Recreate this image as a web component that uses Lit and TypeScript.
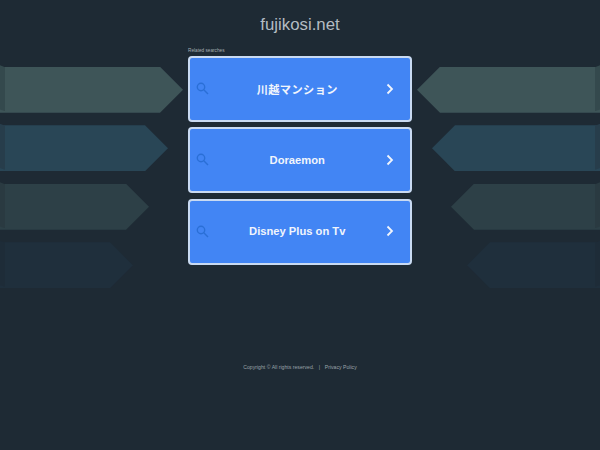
import { LitElement, html, css } from "lit";
import { customElement } from "lit/decorators.js";

const ARROWS = [
  { width: 183, color: "#3e5558", tail: "#34494d" },
  { width: 168, color: "#294656", tail: "#273d4b" },
  { width: 149, color: "#2d4047", tail: "#2a3a41" },
  { width: 133, color: "#1f2f3c", tail: "#1e2c38" },
];
const LINKS = [
  { text: "川越マンション", ja: true },
  { text: "Doraemon", ja: false },
  { text: "Disney Plus on Tv", ja: false },
];

@customElement("app-root")
export class AppRoot extends LitElement {
  static styles = css`
    :host {
      display: block;
      width: 600px;
      height: 450px;
      overflow: hidden;
      background: #1e2a34;
      font-family: "Liberation Sans", "Noto Sans CJK JP", sans-serif;
    }
    .title {
      height: 48px;
      padding-top: 14px;
      box-sizing: border-box;
      text-align: center;
      font-size: 16.8px;
      line-height: 21px;
      color: #b4bcc2;
    }
    .stage {
      display: flex;
      height: 301px;
    }
    .side {
      flex: 1;
      display: flex;
      flex-direction: column;
      gap: 12.5px;
      padding-top: 18.8px;
    }
    .side.right {
      align-items: flex-end;
    }
    .arrow {
      position: relative;
      height: 46px;
      flex: none;
    }
    .right .arrow {
      transform: scaleX(-1);
    }
    .body {
      height: 100%;
      clip-path: polygon(0 0, calc(100% - 23px) 0, 100% 50%, calc(100% - 23px) 100%, 0 100%);
    }
    .tail {
      position: absolute;
      left: 0;
      top: -1.5px;
      height: 46px;
      width: 5px;
      clip-path: polygon(0 0, 100% 4%, 100% 100%, 0 96%);
    }
    .center {
      width: 224px;
      flex: none;
    }
    .label {
      height: 8px;
      font-size: 4.7px;
      line-height: 6px;
      color: #a5adb3;
    }
    .links {
      display: flex;
      flex-direction: column;
      gap: 5.4px;
    }
    .link {
      height: 66px;
      box-sizing: border-box;
      border: 2px solid #c9daf2;
      border-radius: 4px;
      background: #4285f4;
      display: flex;
      align-items: center;
      padding: 0 16px 1px 5.5px;
      color: #f1f5fc;
      font-size: 11.2px;
      font-weight: 700;
    }
    .link span {
      flex: 1;
      text-align: center;
    }
    .link span.ja {
      letter-spacing: 0.4px;
    }
    .link svg {
      flex: none;
      display: block;
    }
    .footer {
      margin-top: 14px;
      display: flex;
      justify-content: center;
      gap: 4.6px;
      font-size: 5.15px;
      line-height: 9px;
      color: #9aa3a9;
    }
  `;

  render() {
    const arrows = ARROWS.map(
      (a) => html`<div class="arrow" style="width:${a.width}px">
        <div class="body" style="background:${a.color}"></div>
        <div class="tail" style="background:${a.tail}"></div>
      </div>`
    );
    return html`
      <div class="title">fujikosi.net</div>
      <div class="stage">
        <div class="side">${arrows}</div>
        <div class="center">
          <div class="label">Related searches</div>
          <div class="links">
            ${LINKS.map(
              (l) => html`<div class="link">
                <svg width="13" height="13" viewBox="0 0 13 13" fill="none" stroke="#2a6fd6" stroke-width="1.4">
                  <circle cx="5" cy="5" r="3.7"></circle>
                  <path d="M7.8 7.8 L12 12"></path>
                </svg>
                <span class=${l.ja ? "ja" : ""}>${l.text}</span>
                <svg width="8" height="12" viewBox="0 0 8 12" fill="none" stroke="#f1f5fc" stroke-width="1.8">
                  <path d="M1.5 1.5 L6 6 L1.5 10.5"></path>
                </svg>
              </div>`
            )}
          </div>
        </div>
        <div class="side right">${arrows}</div>
      </div>
      <div class="footer">
        <span>Copyright © All rights reserved.</span><span>|</span><span>Privacy Policy</span>
      </div>
    `;
  }
}
